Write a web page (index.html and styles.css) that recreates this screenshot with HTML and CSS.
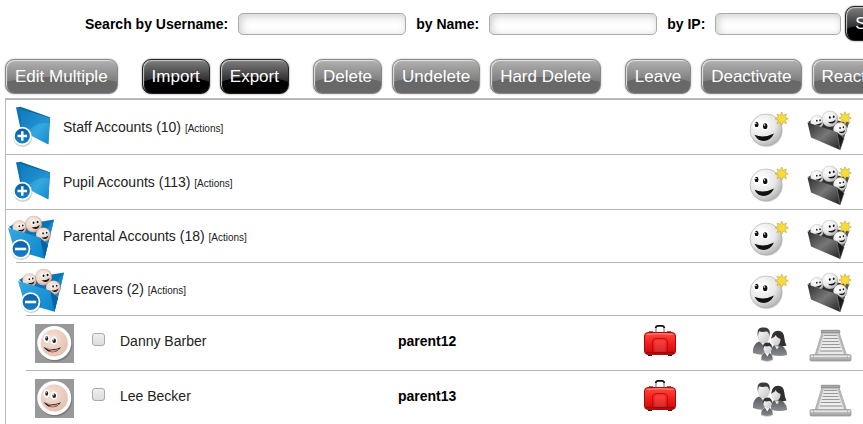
FILE: index.html
```html
<!DOCTYPE html>
<html lang="en">
<head>
  <meta charset="UTF-8">
  <title>Accounts</title>
  <link rel="stylesheet" href="styles.css">
</head>
<body>
  <!-- search bar -->
  <form class="search">
    <label for="username">Search by Username:</label>
    <input type="text" id="username">
    <label for="name">by Name:</label>
    <input type="text" id="name">
    <label for="ip">by IP:</label>
    <input type="text" id="ip" class="short">
    <button type="submit" class="btn">Search</button>
  </form>

  <!-- bulk actions -->
  <div class="toolbar">
    <div class="group">
      <button type="button" class="btn off">Edit Multiple</button>
    </div>
    <div class="group">
      <button type="button" class="btn">Import</button>
      <button type="button" class="btn">Export</button>
    </div>
    <div class="group">
      <button type="button" class="btn off">Delete</button>
      <button type="button" class="btn off">Undelete</button>
      <button type="button" class="btn off">Hard Delete</button>
    </div>
    <div class="group">
      <button type="button" class="btn off">Leave</button>
      <button type="button" class="btn off">Deactivate</button>
      <button type="button" class="btn off">Reactivate</button>
    </div>
  </div>

  <!-- account tree -->
  <ul class="tree">
    <li>
      <div class="row">
        <div class="title">
          <button type="button" class="icon" aria-label="Expand Staff Accounts"><svg width="54" height="50"><use href="#folder-closed"/></svg></button>
          <span>Staff Accounts (10) <a href="#" class="actions">[Actions]</a></span>
        </div>
        <button type="button" class="icon add-user" aria-label="Add user"><svg width="44" height="44"><use href="#smiley-new"/></svg></button>
        <button type="button" class="icon add-group" aria-label="Add group"><svg width="49" height="50"><use href="#folder-new"/></svg></button>
      </div>
    </li>
    <li>
      <div class="row">
        <div class="title">
          <button type="button" class="icon" aria-label="Expand Pupil Accounts"><svg width="54" height="50"><use href="#folder-closed"/></svg></button>
          <span>Pupil Accounts (113) <a href="#" class="actions">[Actions]</a></span>
        </div>
        <button type="button" class="icon add-user" aria-label="Add user"><svg width="44" height="44"><use href="#smiley-new"/></svg></button>
        <button type="button" class="icon add-group" aria-label="Add group"><svg width="49" height="50"><use href="#folder-new"/></svg></button>
      </div>
    </li>
    <li>
      <div class="row open">
        <div class="title">
          <button type="button" class="icon" aria-label="Collapse Parental Accounts"><svg width="54" height="50"><use href="#folder-open"/></svg></button>
          <span>Parental Accounts (18) <a href="#" class="actions">[Actions]</a></span>
        </div>
        <button type="button" class="icon add-user" aria-label="Add user"><svg width="44" height="44"><use href="#smiley-new"/></svg></button>
        <button type="button" class="icon add-group" aria-label="Add group"><svg width="49" height="50"><use href="#folder-new"/></svg></button>
      </div>
      <ul>
        <li>
          <div class="row open">
            <div class="title">
              <button type="button" class="icon" aria-label="Collapse Leavers"><svg width="54" height="50"><use href="#folder-open"/></svg></button>
              <span>Leavers (2) <a href="#" class="actions">[Actions]</a></span>
            </div>
            <button type="button" class="icon add-user" aria-label="Add user"><svg width="44" height="44"><use href="#smiley-new"/></svg></button>
            <button type="button" class="icon add-group" aria-label="Add group"><svg width="49" height="50"><use href="#folder-new"/></svg></button>
          </div>
          <ul>
            <li>
              <div class="row">
                <div class="user">
                  <svg width="39" height="39"><use href="#avatar"/></svg>
                  <input type="checkbox" id="user12">
                  <label for="user12">Danny Barber</label>
                </div>
                <strong class="login">parent12</strong>
                <button type="button" class="icon leave" aria-label="Leave"><svg width="34" height="38"><use href="#suitcase"/></svg></button>
                <button type="button" class="icon add-user" aria-label="Family"><svg width="40" height="38"><use href="#family"/></svg></button>
                <button type="button" class="icon add-group" aria-label="History"><svg width="44" height="38"><use href="#stairs"/></svg></button>
              </div>
            </li>
            <li>
              <div class="row">
                <div class="user">
                  <svg width="39" height="39"><use href="#avatar"/></svg>
                  <input type="checkbox" id="user13">
                  <label for="user13">Lee Becker</label>
                </div>
                <strong class="login">parent13</strong>
                <button type="button" class="icon leave" aria-label="Leave"><svg width="34" height="38"><use href="#suitcase"/></svg></button>
                <button type="button" class="icon add-user" aria-label="Family"><svg width="40" height="38"><use href="#family"/></svg></button>
                <button type="button" class="icon add-group" aria-label="History"><svg width="44" height="38"><use href="#stairs"/></svg></button>
              </div>
            </li>
          </ul>
        </li>
      </ul>
    </li>
  </ul>

  <!-- icon sprite -->
  <svg class="sprite" width="0" height="0">
    <defs>
      <linearGradient id="blue" x1="0" y1="0" x2="1" y2="1">
        <stop offset="0" stop-color="#0f7fc0"/><stop offset=".6" stop-color="#36a8df"/><stop offset="1" stop-color="#1088cb"/>
      </linearGradient>
      <linearGradient id="blueFront" x1="0" y1="0" x2="1" y2="1">
        <stop offset="0" stop-color="#35a9e0"/><stop offset="1" stop-color="#0a84cc"/>
      </linearGradient>
      <linearGradient id="badge" x1="0" y1="0" x2="0" y2="1">
        <stop offset="0" stop-color="#0b5fa5"/><stop offset="1" stop-color="#1482cc"/>
      </linearGradient>
      <radialGradient id="skin" cx=".4" cy=".35" r=".7">
        <stop offset="0" stop-color="#fbeee6"/><stop offset=".65" stop-color="#ecd2c3"/><stop offset="1" stop-color="#c09d8b"/>
      </radialGradient>
      <radialGradient id="skinFlat" cx=".4" cy=".35" r=".7">
        <stop offset="0" stop-color="#f6e3d8"/><stop offset="1" stop-color="#e2bfad"/>
      </radialGradient>
      <radialGradient id="ball" cx=".35" cy=".3" r=".75">
        <stop offset="0" stop-color="#fff"/><stop offset=".6" stop-color="#e8e8e8"/><stop offset="1" stop-color="#b0b0b0"/>
      </radialGradient>
      <linearGradient id="dark" x1="0" y1="0" x2="1" y2="1">
        <stop offset="0" stop-color="#2e2e2e"/><stop offset=".5" stop-color="#777"/><stop offset="1" stop-color="#222"/>
      </linearGradient>
      <linearGradient id="red" x1="0" y1="0" x2="0" y2="1">
        <stop offset="0" stop-color="#ff4a42"/><stop offset=".5" stop-color="#f41d1d"/><stop offset="1" stop-color="#c50a0a"/>
      </linearGradient>
      <linearGradient id="suit" x1="0" y1="0" x2="0" y2="1">
        <stop offset="0" stop-color="#55585c"/><stop offset="1" stop-color="#8b8e92"/>
      </linearGradient>
      <linearGradient id="face" x1="0" y1="0" x2="1" y2="1">
        <stop offset="0" stop-color="#fff"/><stop offset="1" stop-color="#c4c4c4"/>
      </linearGradient>
      <linearGradient id="steel" x1="0" y1="0" x2="0" y2="1">
        <stop offset="0" stop-color="#d8d8d8"/><stop offset="1" stop-color="#999"/>
      </linearGradient>
    </defs>

    <symbol id="star" viewBox="0 0 14 14">
      <path d="M7 0l1.5 3.6L12 2l-1.5 3.5L14 7l-3.5 1.5L12 12l-3.5-1.5L7 14l-1.5-3.5L2 12l1.5-3.5L0 7l3.5-1.5L2 2l3.5 1.6z" fill="#f6dd3c" stroke="#c9a94a" stroke-width=".7"/>
    </symbol>

    <!-- small face seen inside the folders -->
    <symbol id="head" viewBox="0 0 16 16">
      <circle cx="8" cy="8" r="7.6" stroke="#444" stroke-opacity=".35" stroke-width=".5"/>
      <ellipse cx="7.400" cy="6.300" rx="1.800" ry="2.100" fill="#fff"/>
      <ellipse cx="11.500" cy="5.500" rx="1.700" ry="2" fill="#fff"/>
      <ellipse cx="7.800" cy="6.600" rx=".9" ry="1.100" fill="#111"/>
      <ellipse cx="11.500" cy="5.900" rx=".9" ry="1.100" fill="#111"/>
      <path d="M6 10.500q4 1 7.400-1.800-.9 3.600-3.700 3.600-2.300.1-3.700-1.800z" fill="#151515"/>
    </symbol>

    <symbol id="folder-closed" viewBox="0 0 54 50">
      <path d="M8 5.500l4.500-.7L42 15.300 40.300 42 39 40.500z" fill="#0a68a3"/>
      <path d="M8 5.500l5 1.500 2 16-2 6z" fill="#0d74b3"/>
      <path d="M12 7l30 9-1.700 26.500L14 29z" fill="url(#blue)"/>
      <path d="M12 7l30 9-.3 5Q26 19 19 31.500L14 29z" fill="#0b74b8" opacity=".4"/>
      <circle cx="14.800" cy="35.500" r="9.500" fill="#000" opacity=".18"/>
      <circle cx="14.300" cy="34" r="9.300" fill="#fff"/>
      <circle cx="14.300" cy="34" r="7.600" fill="url(#badge)"/>
      <path d="M14.300 29.200v9.600M9.500 34h9.600" stroke="#fff" stroke-width="2.400"/>
    </symbol>

    <symbol id="folder-open" viewBox="0 0 54 50">
      <path d="M1 16l8-5 8 2 14-2 15-2.500-9.500 39z" fill="#0873b8"/>
      <use href="#head" x="4" y="9" width="15" height="15" fill="url(#skin)"/>
      <use href="#head" x="17" y="4.500" width="17.500" height="17.500" fill="url(#skin)"/>
      <path d="M46 8.500l-9.500 39L32 26z" fill="#1689cb"/>
      <use href="#head" x="27.500" y="16" width="15.500" height="15.500" fill="url(#skin)"/>
      <path d="M0 17l32 9.500 4.500 21.200L6.500 39z" fill="url(#blueFront)"/>
      <path d="M32 26.500l4.500 21.200 3.500-14z" fill="#0a62a0"/>
      <circle cx="13.200" cy="39.300" r="10" fill="#000" opacity=".18"/>
      <circle cx="12.600" cy="38" r="9.800" fill="#fff"/>
      <circle cx="12.600" cy="38" r="8" fill="url(#badge)"/>
      <path d="M7 38h11.200" stroke="#fff" stroke-width="2.600"/>
    </symbol>

    <symbol id="smiley-new" viewBox="0 0 44 44">
      <ellipse cx="20.500" cy="25.600" rx="16.200" ry="16.300" fill="#000" opacity=".15"/>
      <circle cx="20" cy="25" r="16" fill="url(#ball)" stroke="#aaa" stroke-width=".6"/>
      <ellipse cx="10.600" cy="19.600" rx="3.800" ry="4.800" fill="#fff"/>
      <ellipse cx="19" cy="21" rx="4" ry="4.800" fill="#fff"/>
      <ellipse cx="10.600" cy="19.400" rx="1.900" ry="2.700" fill="#111"/>
      <ellipse cx="19.200" cy="21.200" rx="2.200" ry="2.900" fill="#111"/>
      <circle cx="9.900" cy="18.500" r=".8" fill="#fff"/>
      <circle cx="18.500" cy="20" r=".8" fill="#fff"/>
      <path d="M8.500 29.800q9.500 3.800 19.500-1.300-3.500 7.500-10.500 7.500-6 0-9-6.200z" fill="#111"/>
      <use href="#star" x="29" y="7" width="13.500" height="13.500"/>
    </symbol>

    <symbol id="folder-new" viewBox="0 0 49 50">
      <path d="M2 20l9-5 32 5.500-9 27z" fill="#333"/>
      <use href="#head" x="4" y="13" width="14" height="14" fill="url(#ball)"/>
      <use href="#head" x="15.500" y="8.500" width="17" height="17" fill="url(#ball)"/>
      <path d="M43 19.500L34 47.500 30.500 29z" fill="#555"/>
      <use href="#head" x="27" y="20" width="14.500" height="14.500" fill="url(#ball)"/>
      <path d="M1.500 20.500l29.300 9.500 3.400 18L5 35.500z" fill="url(#dark)"/>
      <path d="M30.800 30l3.400 18 4-12z" fill="#1b1b1b" stroke="#999" stroke-width=".5"/>
      <use href="#star" x="32.500" y="9.500" width="13" height="13"/>
    </symbol>

    <symbol id="avatar" viewBox="0 0 39 39">
      <path d="M0 0h39v39H0z" fill="#999"/>
      <circle cx="20.300" cy="20.500" r="17" fill="#000" opacity=".2"/>
      <circle cx="19.300" cy="19" r="17" fill="#fff"/>
      <circle cx="19.300" cy="19" r="13.600" fill="url(#skinFlat)"/>
      <ellipse cx="11.500" cy="14.600" rx="3" ry="4.200" fill="#fff"/>
      <ellipse cx="19" cy="16.500" rx="3.200" ry="4" fill="#fff"/>
      <ellipse cx="11.700" cy="14.500" rx="1.500" ry="2.200" fill="#222"/>
      <ellipse cx="19.200" cy="16.700" rx="1.800" ry="2.300" fill="#222"/>
      <circle cx="11.200" cy="13.700" r=".6" fill="#fff"/>
      <circle cx="18.600" cy="15.800" r=".7" fill="#fff"/>
      <path d="M8.500 23q8.500 4.500 17.500.3-3 5-8.500 5-5.500 0-9-5.300z" fill="#222"/>
      <path d="M10.500 24.300q7.500 3 13.500.6-1.500 1.500-3 1.600-6 .8-10.500-2.200z" fill="#fff"/>
      <path d="M13.500 27q4-1.500 8.500 0-4.500 2.300-8.500 0z" fill="#f07070"/>
    </symbol>

    <symbol id="suitcase" viewBox="0 0 34 38">
      <path d="M13 8V3.500M21 8V3.500" stroke="#aaa" stroke-width="1.800"/>
      <path d="M12.700 4q.3-2.200 2.300-2.200h4q2 0 2.300 2.200" fill="none" stroke="#111" stroke-width="1.800"/>
      <path d="M6 7.500h4M24 7.500h4" stroke="#a55" stroke-width="1.200"/>
      <path d="M5 30.500h4V32H5zM25 30.500h4V32h-4z" fill="#222"/>
      <rect x="1.500" y="8.500" width="31" height="22" rx="3.500" fill="url(#red)" stroke="#a80d0d"/>
      <path d="M3.500 10.500q13.500-1.500 27 0" fill="none" stroke="#ff8d85" stroke-width="1.200"/>
      <path d="M9.500 29V18q0-3.500 3.500-3.500h8q3.500 0 3.500 3.500v11z" fill="none" stroke="#a80d0d" stroke-width=".8"/>
      <path d="M11.500 28V18.500q0-2 2-2h7q2 0 2 2V28z" fill="#fff" opacity=".12"/>
      <path d="M3 28.500h28" stroke="#9c0808" stroke-width="1.200"/>
    </symbol>

    <symbol id="family" viewBox="0 0 40 38">
      <path d="M5 29q-.8-8.500 6-11.500l5 3 6-2v10.500q-8 3.500-17 0z" fill="url(#suit)"/>
      <path d="M13 18.500l4 6 3.500-7z" fill="#f4f4f4"/>
      <ellipse cx="15.800" cy="11.800" rx="5.600" ry="7" fill="url(#face)" stroke="#aaa" stroke-width=".4"/>
      <path d="M9.800 12Q8.500 4 14 3.600q7.500-1 7.800 5l-.3 3.400q-.8-4.500-3-4.500-5.500 1-7.300-.5-1 2-1.400 5z" fill="#3b3b3b"/>
      <path d="M23 31q-1-10 6-10.500 9.500.5 10 10.500-7 2-16 0z" fill="url(#suit)"/>
      <path d="M23.500 15q0-8 6.500-8.200 6.200.2 6.500 8 .2 4 2 6.700-4.500 1.500-8-.5z" fill="#303030"/>
      <ellipse cx="28" cy="15.500" rx="4.500" ry="6.300" fill="url(#face)"/>
      <path d="M23.300 14.500q.7-6 6-6 3.500 1 4 6.500-4.500-1-5.500-4-1.500 3-4.500 3.500z" fill="#303030"/>
      <path d="M27 22l2 3.500 2-3z" fill="#eee"/>
      <path d="M13 36q-.5-7 6-8 6.500 1 6 8-6 3-12 0z" fill="url(#suit)" stroke="#eee" stroke-width=".5"/>
      <path d="M16.500 28l2.800 4.500 2.700-4.500z" fill="#fff"/>
      <ellipse cx="19.500" cy="24.500" rx="4" ry="4.900" fill="url(#face)"/>
      <path d="M15.200 25q-1.200-6.300 4-6.500 5.500 0 4.800 6.500-1-3-2.500-3-3.500.8-5 0-1 1-1.300 3z" fill="#333"/>
    </symbol>

    <symbol id="stairs" viewBox="0 0 44 38">
      <path d="M13 8h17l7.500 23H6z" fill="#ddd" stroke="#999" stroke-width=".6"/>
      <path d="M13.500 10L7 31M29.500 10L36.500 31" stroke="#b5b5b5" stroke-width="2"/>
      <path d="M15 11.500h13M14.500 14.500h14.500M13.500 17.500h16M13 20.500h17.500M12 23.500h19.500M11 27h22" stroke="#999" stroke-width="1"/>
      <path d="M14.500 13h14M14 16h15M13 19h17M12.500 22h18.500M11.500 25.200h21M10.500 29h23.500" stroke="#f8f8f8" stroke-width="1.200"/>
      <rect x="12.300" y="6.300" width="18.500" height="2.600" rx=".6" fill="#aaa" stroke="#777" stroke-width=".7"/>
      <rect x="1" y="30.500" width="41" height="6.500" rx="1.300" fill="url(#steel)" stroke="#999" stroke-width=".8"/>
      <path d="M2 32.500h39" stroke="#e6e6e6"/>
      <path d="M4.500 31v5.500M38.500 31v5.500" stroke="#aaa" stroke-width=".7"/>
    </symbol>
  </svg>
</body>
</html>
```

FILE: styles.css
```css
* {
  box-sizing: border-box;
}

body {
  margin: 0;
  padding: 6px 0 0 5px;
  min-height: 100vh;
  display: flex;
  flex-direction: column;
  overflow: hidden;
  background-color: #fff;
  color: #222;
  font-family: Arial, "Liberation Sans", sans-serif;
  font-size: 14px;
}

.sprite {
  position: absolute;
}

/* search bar */
.search {
  display: flex;
  align-items: center;
  padding-left: 80px;
  color: #000;
  font-weight: bold;
  white-space: nowrap;
}

.search input {
  flex: none;
  width: 168px;
  height: 22px;
  margin: 0 10px;
  border: 1px solid #aaa;
  border-radius: 5px;
  box-shadow: inset 2px 2px 8px #ccc;
}

.search .short {
  width: 126px;
  margin-right: 4px;
}

/* glossy buttons */
.btn {
  flex: none;
  height: 35px;
  padding: 0 9px;
  border: 1px solid #222;
  border-radius: 9px;
  background: radial-gradient(ellipse 70% 50% at 50% 100%, #000 97%, transparent 100%), linear-gradient(#808080, #303030 60%, #000);
  box-shadow: inset 1px 1px 1px #ccc, 0 0 2px #777;
  color: #fff;
  font-family: inherit;
  font-size: 17px;
  cursor: pointer;
}

.btn.off {
  border-color: #888;
  background: radial-gradient(ellipse 70% 50% at 50% 100%, #686868 97%, transparent 100%), linear-gradient(#b2b2b2, #808080 60%, #6c6c6c);
  box-shadow: inset 1px 1px 1px #e4e4e4, 0 0 2px #aaa;
}

.toolbar {
  display: flex;
  gap: 24px;
  margin: 18px 0 4px;
}

.group {
  display: flex;
  flex: none;
  gap: 10px;
}

/* account tree */
.tree {
  flex: 1;
  border-top: 1px solid #bbb;
  border-left: 1px solid #bbb;
}

ul {
  margin: 0;
  padding: 0;
  list-style: none;
}

ul ul {
  margin-left: 10px;
}

.row {
  display: grid;
  grid-template-columns: 1fr 232px 108px 60px 65px;
  align-items: center;
  height: 55px;
  border-top: 1px solid #b4b4b4;
}

.row.open {
  height: 53px;
}

.title {
  grid-column: 1 / 4;
  display: flex;
  align-items: center;
  gap: 1px;
  padding-left: 2px;
}

.actions {
  color: #222;
  font-size: 10px;
  text-decoration: none;
}

.user {
  display: flex;
  align-items: center;
  padding-left: 9px;
}

.user input {
  appearance: none;
  width: 13px;
  height: 13px;
  margin: 0 15px 7px 18px;
  border: 1px solid #aaa;
  border-radius: 3px;
  background: linear-gradient(#eee, #ddd);
}

.user label,
.login {
  padding-bottom: 4px;
}

.login {
  color: #000;
}

.icon {
  display: flex;
  padding: 0;
  border: none;
  background: none;
  cursor: pointer;
}

.leave {
  margin-left: 13px;
}

.add-user,
.add-group {
  justify-content: center;
}
```
